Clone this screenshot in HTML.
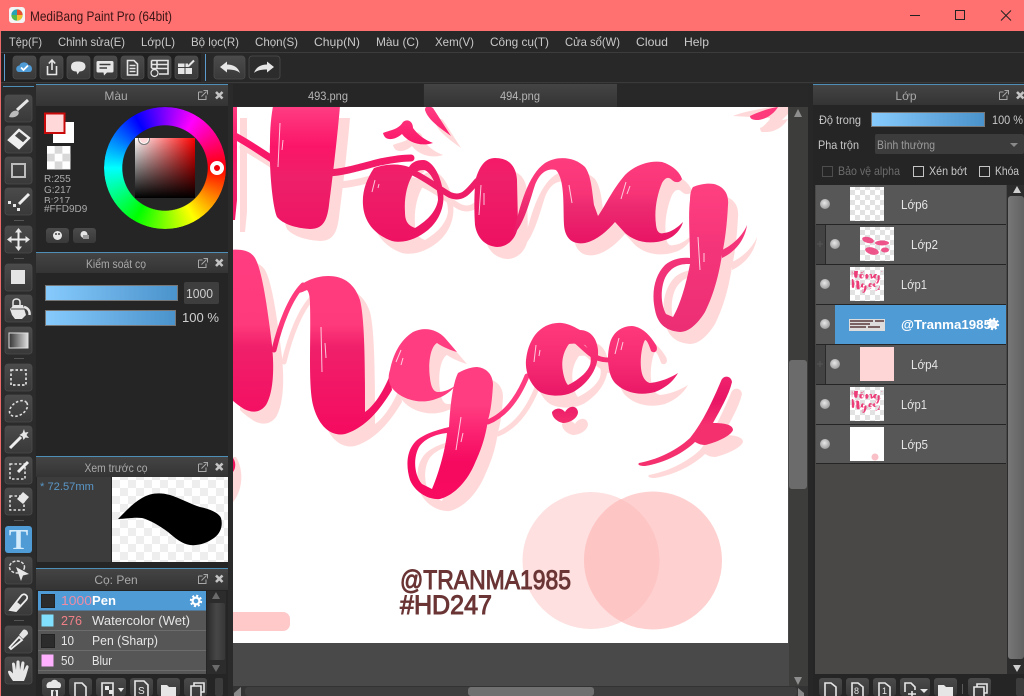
<!DOCTYPE html>
<html><head><meta charset="utf-8"><title>MediBang Paint Pro</title>
<style>
html,body{margin:0;padding:0;background:#2a2a2a;width:1024px;height:696px;overflow:hidden}
svg{position:absolute;left:0;top:0}
svg text{font-family:"Liberation Sans","Noto Sans CJK JP",sans-serif;font-size:12px}
.f{stroke:none;fill-rule:evenodd}
.s{fill:none;stroke-linecap:round;stroke-linejoin:round}
.m{fill:#c9c9c9;font-size:12px}
.t{fill:#a9a9a9;font-size:12px;text-anchor:middle}
.i{fill:#e6e6e6;stroke:none}
.l{fill:none;stroke:#e6e6e6;stroke-width:1.6}
.v{fill:#e4e4e4;font-size:12.5px}
#wheel{position:absolute;left:104px;top:107px;width:122px;height:122px;border-radius:50%;
background:conic-gradient(from 30deg,#f0f 0deg,#f00 60deg,#ff0 120deg,#0f0 180deg,#0ff 240deg,#00f 300deg,#f0f 360deg);
-webkit-mask:radial-gradient(closest-side,transparent 69.5%,#000 70.5%);mask:radial-gradient(closest-side,transparent 69.5%,#000 70.5%)}
#sq{position:absolute;left:135px;top:138px;width:60px;height:60px;overflow:hidden;
background:linear-gradient(to top,#000,rgba(0,0,0,0)),linear-gradient(to right,#fff,#f00)}
#sq i{position:absolute;left:3px;top:-5px;width:10px;height:10px;border-radius:50%;background:#ffd9d9;border:1px solid #777;box-shadow:inset 0 0 0 1px #fff}
#hm{position:absolute;left:210px;top:161px;width:6px;height:6px;border:4px solid #fff;border-radius:50%;background:#f00008}
</style></head><body>
<svg width="1024" height="696" viewBox="0 0 1024 696" xmlns="http://www.w3.org/2000/svg">
<defs>
<linearGradient id="gA" gradientUnits="userSpaceOnUse" x1="0" y1="107" x2="0" y2="250"><stop offset="0" stop-color="#ff3d82"/><stop offset=".28" stop-color="#fb1568"/><stop offset=".5" stop-color="#ee2069"/><stop offset="1" stop-color="#ee1062"/></linearGradient>
<linearGradient id="gB" gradientUnits="userSpaceOnUse" x1="0" y1="158" x2="0" y2="246"><stop offset="0" stop-color="#fd3c7e"/><stop offset=".4" stop-color="#f83477"/><stop offset=".55" stop-color="#ec2a70"/><stop offset="1" stop-color="#e81264"/></linearGradient>
<linearGradient id="gC" gradientUnits="userSpaceOnUse" x1="0" y1="185" x2="0" y2="332"><stop offset="0" stop-color="#ff4080"/><stop offset=".4" stop-color="#f53579"/><stop offset="1" stop-color="#ec2e75"/></linearGradient>
<linearGradient id="gD" gradientUnits="userSpaceOnUse" x1="0" y1="250" x2="0" y2="436"><stop offset="0" stop-color="#ff3d80"/><stop offset=".4" stop-color="#ff3a7c"/><stop offset=".52" stop-color="#f0206a"/><stop offset="1" stop-color="#f50a60"/></linearGradient>
<linearGradient id="gE" gradientUnits="userSpaceOnUse" x1="0" y1="328" x2="0" y2="500"><stop offset="0" stop-color="#ff3d80"/><stop offset=".45" stop-color="#ff3d80"/><stop offset=".62" stop-color="#fb2070"/><stop offset=".78" stop-color="#f50a60"/><stop offset="1" stop-color="#f80a60"/></linearGradient>
<linearGradient id="gF" gradientUnits="userSpaceOnUse" x1="0" y1="323" x2="0" y2="425"><stop offset="0" stop-color="#ff3a7c"/><stop offset=".4" stop-color="#f52a72"/><stop offset=".75" stop-color="#e81565"/><stop offset="1" stop-color="#f5306f"/></linearGradient>
<linearGradient id="sl" x1="0" x2="1" y1="0" y2="0"><stop offset="0" stop-color="#87cbfd"/><stop offset="1" stop-color="#4a92cb"/></linearGradient>
<linearGradient id="bt" x1="0" x2="0" y1="0" y2="1"><stop offset="0" stop-color="#4b4b4b"/><stop offset="1" stop-color="#393939"/></linearGradient>
<linearGradient id="hd" x1="0" x2="0" y1="0" y2="1"><stop offset="0" stop-color="#444"/><stop offset="1" stop-color="#343434"/></linearGradient>
<linearGradient id="gr" x1="0" x2="1" y1="0" y2="0"><stop offset="0" stop-color="#333"/><stop offset="1" stop-color="#e0e0e0"/></linearGradient>
<linearGradient id="th" x1="0" x2="1" y1="0" y2="0"><stop offset="0" stop-color="#777"/><stop offset="1" stop-color="#626262"/></linearGradient>
<linearGradient id="tr" x1="0" x2="1" y1="0" y2="0"><stop offset="0" stop-color="#2d2d2d"/><stop offset=".5" stop-color="#474747"/><stop offset="1" stop-color="#383838"/></linearGradient>
<radialGradient id="eye" cx=".45" cy=".4" r=".6"><stop offset="0" stop-color="#e8e8e8"/><stop offset="1" stop-color="#9c9c9c"/></radialGradient>
<pattern id="c16" width="16" height="16" patternUnits="userSpaceOnUse"><rect width="16" height="16" fill="#fff"/><rect width="8" height="8" fill="#eee"/><rect x="8" y="8" width="8" height="8" fill="#eee"/></pattern>
<pattern id="c15" x="47" y="146" width="15.4" height="15.4" patternUnits="userSpaceOnUse"><rect width="16" height="16" fill="#fff"/><rect x="7.7" width="7.7" height="7.7" fill="#d8d8d8"/><rect y="7.7" width="7.7" height="7.7" fill="#d8d8d8"/></pattern>
<pattern id="c12" width="10" height="10" patternUnits="userSpaceOnUse"><rect width="10" height="10" fill="#fff"/><rect width="5" height="5" fill="#e2e2e2"/><rect x="5" y="5" width="5" height="5" fill="#e2e2e2"/></pattern>
<clipPath id="cv"><rect x="233" y="107" width="555" height="536"/></clipPath>
<clipPath id="cR"><circle cx="653" cy="560" r="69"/></clipPath>
<g id="A">
<path class="f" d="M273,106L340,106C338,130 333,175 329,205C327,222 322,229 310,229C295,228 283,224 277,217C272,205 269,165 270,143C270,128 271,118 273,106Z"/>
<path class="f" d="M230,106H237V200L235,220H230Z"/>
<path class="s" stroke-width="7" d="M233,135C245,141 258,150 272,159M328,173C345,172 360,167 380,162C395,159 405,158 411,158"/>
<path class="f" d="M374,168C366,180 362,192 363,205C364,222 375,235 392,241C405,244 418,238 428,230C440,220 445,205 443,192C441,175 432,160 423,160C417,160 412,162 409,167C398,163 385,164 374,168ZM412,176C407,185 404,198 405,212C405,220 407,225 415,228C425,222 436,213 438,200C438,188 432,172 424,170C418,170 415,172 412,176Z"/>
<path class="s" stroke-width="6" d="M414,173C425,178 438,188 450,195C462,200 468,192 477,181"/>
<path class="f" d="M476,178C480,165 486,158 495,158C508,158 516,165 517,180L518,225C517,238 508,247 497,247C485,246 477,238 475,225C474,210 474,190 476,178Z"/>
<path class="f" d="M383,133C390,130 398,130 403,122C408,118 413,122 413,128C418,135 425,140 433,143C420,147 408,142 402,134C395,140 385,142 383,133Z"/>
<path class="f" d="M425,110C425,105 430,106 433,108L451,136C440,128 428,120 425,110Z"/>
</g>
<g id="B">
<path class="f" d="M513,235C520,205 528,175 545,163C558,155 575,157 585,167C591,175 592,190 594,205L598,216C604,208 612,190 625,175C635,165 650,160 662,162C672,165 680,172 682,179C680,183 675,183 672,180C668,176 665,178 662,183C657,195 654,210 656,225C657,233 660,234 664,233C672,232 678,227 683,222C680,232 672,238 665,240C650,245 635,242 625,233L615,222C608,230 598,240 585,243C572,245 565,238 564,225C563,205 565,180 556,170C548,168 540,172 535,185C530,200 524,225 513,235Z"/>
</g>
<g id="C">
<path class="f" d="M693,187C700,184 708,183 714,184C725,187 729,195 728,205C727,225 725,240 722,255C718,280 712,298 705,312C697,325 688,332 680,332C668,331 658,326 655,310C651,292 655,275 665,265C672,259 682,257 690,258C690,240 688,215 690,200C690,194 691,190 693,187ZM688,264C678,264 670,268 665,278C660,290 661,305 666,314L673,317C680,305 686,285 690,264Z"/>
<path class="f" d="M722,250C733,245 743,235 747,225C745,240 735,252 722,258Z"/>
</g>
<g id="D">
<path class="f" d="M230,250C240,249 250,250 255,258C262,270 267,305 272,345C275,375 272,395 266,405C260,413 252,413 244,409C238,405 234,402 230,398Z"/>
<path class="s" stroke-width="5" d="M274,350C280,325 290,298 303,285"/>
<path class="f" d="M296,290C302,282 315,276 328,276C345,276 355,285 360,300C365,320 365,370 365,412C375,405 384,390 390,375L392,390C380,410 365,428 345,434C330,437 318,425 313,405C308,385 311,340 310,305C310,297 309,292 307,290C302,292 298,295 296,290Z"/>
</g>
<g id="E">
<path class="f" d="M390,370C393,355 400,340 413,332C425,326 438,330 445,338L457,352C450,350 443,347 437,343C430,347 428,365 430,378C431,388 434,392 438,392C445,392 450,389 455,386C450,393 440,399 428,401C415,403 400,398 392,388C388,382 388,376 390,370Z"/>
<path class="f" d="M458,373C465,369 472,367 477,367C487,368 493,375 493,385C492,400 491,410 488,420C485,440 480,452 475,463C468,480 455,495 440,499C428,500 415,492 410,480C406,467 406,452 415,442C423,434 437,430 449,427C450,410 452,385 458,373ZM447,433C437,434 425,438 419,447C413,458 414,475 422,484L432,489C438,475 445,452 447,433Z"/>
<path class="s" stroke-width="5" d="M488,422C505,415 518,398 527,376"/>
</g>
<g id="G">
<path class="f" d="M535,335C542,326 552,322 562,323C570,324 576,328 580,330C590,330 597,338 598,350C599,365 592,380 575,391C565,397 550,397 540,392C530,385 525,372 526,360C527,350 530,342 535,335ZM569,344C563,352 561,362 563,372C564,378 566,383 568,385C578,380 587,373 590,365C592,358 590,350 585,345C580,344 574,343 569,344Z"/>
<path class="s" stroke-width="5" d="M572,338C578,342 585,350 592,355C598,359 603,360 610,360"/>
<path class="f" d="M610,343C613,332 622,326 632,326C642,327 650,335 656,345C659,351 654,354 651,351C649,345 647,340 645,340C642,345 640,358 641,368C642,378 646,382 650,383C660,382 670,378 678,373C673,382 665,388 655,392C640,396 625,393 615,383C608,375 606,358 610,343Z"/>
<path class="f" d="M552,412C556,407 562,408 565,412C569,405 577,405 578,412C578,418 570,423 563,423C558,422 552,418 552,412Z"/>
<path class="f" d="M639,463C655,460 675,452 690,438C703,422 713,400 721,381C723,375 731,375 732,382C729,395 720,410 713,423C722,423 733,424 733,430C731,436 715,443 705,445C700,445 697,443 695,442C685,452 665,463 645,466C640,466 637,465 639,463Z"/>
<path class="f" d="M750,116C758,112 770,108 778,107C774,114 765,120 757,120C753,120 750,119 750,116Z"/>
</g>
<g id="art"><use href="#A"/><use href="#B"/><use href="#C"/><use href="#D"/><use href="#E"/><use href="#G"/></g>
<g id="pi"><path d="M0.5,2H4.5M0.5,2V9.5H8V5.5" fill="none" stroke="#a8a8a8"/><path d="M3.5,6.5L8.5,1.5M5.5,.5H9.5V4.5" fill="none" stroke="#a8a8a8"/></g>
<g id="px"><path d="M1,1L7.5,7.5M7.5,1L1,7.5" stroke="#c4c4c4" stroke-width="2.6"/></g>
<g id="gear"><circle r="3.4" fill="none" stroke="#fff" stroke-width="2.2"/><circle r="5" fill="none" stroke="#fff" stroke-width="2.4" stroke-dasharray="2 1.93"/></g>
<g id="eyeb"><circle r="5" fill="url(#eye)"/></g>
<rect id="tb" width="27" height="27" rx="3" fill="url(#bt)" stroke="#4c4c4c" stroke-width=".8"/>
<rect id="b23" width="23" height="23" rx="3" fill="url(#bt)" stroke="#4c4c4c" stroke-width=".8"/>
</defs>

<!-- window -->
<rect width="1024" height="696" fill="#2a2a2a"/>
<rect width="1024" height="31" fill="#ff7070"/>
<rect x="0" y="31" width="1" height="665" fill="#e86a6a"/>
<rect x="9" y="7" width="16" height="16" rx="3" fill="#f4f4f4"/>
<circle cx="17" cy="15" r="5.6" fill="#27a3b8"/><path d="M17,9.4A5.6,5.6 0 0 1 22.6,15L17,15Z" fill="#e8502e"/><path d="M22.6,15A5.6,5.6 0 0 1 17,20.6L17,15Z" fill="#f0c030"/><path d="M17,20.6A5.6,5.6 0 0 1 11.4,15L17,15Z" fill="#58b848"/>
<text x="30" y="21" textLength="142" lengthAdjust="spacingAndGlyphs" style="font-size:14px" fill="#3a1515">MediBang Paint Pro (64bit)</text>
<path d="M910,15.5H920" stroke="#222" stroke-width="1"/>
<rect x="955.5" y="10.5" width="9" height="9" fill="none" stroke="#222"/>
<path d="M1001,10.5L1011,20.5M1011,10.5L1001,20.5" stroke="#222"/>

<!-- menu -->
<rect x="1" y="31" width="1023" height="21" fill="#282828"/>
<g>
<text class="m" x="9" y="46" textLength="33" lengthAdjust="spacingAndGlyphs">Tệp(F)</text>
<text class="m" x="58" y="46" textLength="67" lengthAdjust="spacingAndGlyphs">Chỉnh sửa(E)</text>
<text class="m" x="141" y="46" textLength="34" lengthAdjust="spacingAndGlyphs">Lớp(L)</text>
<text class="m" x="191" y="46" textLength="48" lengthAdjust="spacingAndGlyphs">Bộ lọc(R)</text>
<text class="m" x="255" y="46" textLength="43" lengthAdjust="spacingAndGlyphs">Chọn(S)</text>
<text class="m" x="314" y="46" textLength="46" lengthAdjust="spacingAndGlyphs">Chụp(N)</text>
<text class="m" x="376" y="46" textLength="43" lengthAdjust="spacingAndGlyphs">Màu (C)</text>
<text class="m" x="435" y="46" textLength="39" lengthAdjust="spacingAndGlyphs">Xem(V)</text>
<text class="m" x="490" y="46" textLength="59" lengthAdjust="spacingAndGlyphs">Công cụ(T)</text>
<text class="m" x="565" y="46" textLength="55" lengthAdjust="spacingAndGlyphs">Cửa sổ(W)</text>
<text class="m" x="636" y="46" textLength="32" lengthAdjust="spacingAndGlyphs">Cloud</text>
<text class="m" x="684" y="46" textLength="25" lengthAdjust="spacingAndGlyphs">Help</text>
</g>

<!-- toolbar -->
<rect x="1" y="52" width="1023" height="1" fill="#3c3c3c"/>
<rect x="1" y="53" width="1023" height="29" fill="#282828"/>
<rect x="1" y="53" width="200" height="29" fill="#202020"/>
<rect x="1" y="82" width="1023" height="1" fill="#3a3a3a"/>
<rect x="4" y="54" width="1" height="27" fill="#5b9ccc"/><rect x="205" y="54" width="1" height="27" fill="#5b9ccc"/>
<use href="#b23" x="13" y="56"/><use href="#b23" x="40" y="56"/><use href="#b23" x="67" y="56"/><use href="#b23" x="94" y="56"/><use href="#b23" x="121" y="56"/><use href="#b23" x="148" y="56"/><use href="#b23" x="175" y="56"/>
<rect x="214" y="56" width="31" height="23" rx="3" fill="url(#bt)" stroke="#4c4c4c" stroke-width=".8"/>
<rect x="249" y="56" width="31" height="23" rx="3" fill="#2c2c2c" stroke="#4c4c4c" stroke-width=".8"/>
<path d="M19,72C15.5,72 15,66 19.5,65.5C20.5,61.5 27,61.5 28.5,65C33,65 33,72 29.5,72Z" fill="#4f9bd6"/><path d="M21,67.5L23.5,70L28,65.5" fill="none" stroke="#fff" stroke-width="1.8"/>
<path class="l" d="M47.5,66V74.5H56.5V66"/><path class="l" d="M52,70V60M48.8,63.5L52,60L55.2,63.5"/>
<path class="i" d="M71,67C71,62.5 74,61.5 78,61.5C82,61.5 85.5,62.5 85.5,66.5C85.5,70 82,71.5 79.5,71.5L77.5,74.5L76.5,71.5C73,71.5 71,70 71,67Z"/>
<path class="i" d="M98,61H112Q113.5,61 113.5,62.5V71Q113.5,72.5 112,72.5H107L104,75.5L103.5,72.5H98Q96.5,72.5 96.5,71V62.5Q96.5,61 98,61Z"/><path d="M99.5,64.5H110.5M99.5,68H107" stroke="#3d3d3d" stroke-width="1.6"/>
<path class="l" d="M127.5,60.5H134L137.5,64V75H127.5ZM129.5,65.5H135.5M129.5,68.5H135.5M129.5,71.5H135.5" stroke-width="1.2"/>
<path class="l" d="M151.5,60.5H168V74H159M151.5,60.5V68M151.5,64.5H168M151.5,68.5H168M157,60.5V68" stroke-width="1.2"/><circle cx="154.5" cy="73" r="3.5" fill="none" stroke="#e6e6e6" stroke-width="1.2"/>
<path class="i" d="M178,63.5H184.5V67H178ZM185.5,63.5H188V67H185.5ZM178,68H184.5V74H178ZM185.5,68H192V74H185.5Z"/><path d="M188,66.5L194,60.5" stroke="#e6e6e6" stroke-width="2"/>
<path class="i" d="M220,67L227,61.5V64.5C233,64.5 238,67 240,73C237,70 232,69.5 227,69.5V72.5Z"/>
<path class="i" d="M274,67L267,61.5V64.5C261,64.5 256,67 254,73C257,70 262,69.5 267,69.5V72.5Z"/>

<!-- left tool column -->
<rect x="1" y="83" width="34" height="613" fill="#2b2b2b"/>
<rect x="3" y="86" width="31" height="1" fill="#4e8fb8"/>
<use href="#tb" x="5" y="95"/><use href="#tb" x="5" y="126"/><use href="#tb" x="5" y="157"/><use href="#tb" x="5" y="188"/><use href="#tb" x="5" y="226"/><use href="#tb" x="5" y="264"/><use href="#tb" x="5" y="295"/><use href="#tb" x="5" y="327"/><use href="#tb" x="5" y="364"/><use href="#tb" x="5" y="395"/><use href="#tb" x="5" y="426"/><use href="#tb" x="5" y="457"/><use href="#tb" x="5" y="488"/>
<rect x="5" y="526" width="27" height="27" rx="3" fill="#4f9bd6"/>
<use href="#tb" x="5" y="557"/><use href="#tb" x="5" y="588"/><use href="#tb" x="5" y="626"/><use href="#tb" x="5" y="657"/>
<path d="M14,220.5H24M14,258.5H24M14,358.5H24M14,520.5H24M14,620.5H24" stroke="#555"/>
<!-- tool icons -->
<g transform="translate(5,95)"><path d="M23,5L12,15" stroke="#e6e6e6" stroke-width="3"/><path d="M4,22C6,16 10,14.5 13.5,16.5C15,20 10,23.5 4,22Z" fill="#bbb"/></g>
<g transform="translate(5,126)"><path d="M4,14L14,4L24,12L14,22Z" fill="none" stroke="#eee" stroke-width="2.4"/><path d="M4,14L9,9L19,17L14,22Z" fill="#eee"/></g>
<g transform="translate(5,157)"><rect x="7" y="7" width="13" height="13" fill="none" stroke="#bdbdbd" stroke-width="2"/></g>
<g transform="translate(5,188)"><path d="M24,6L14,16" stroke="#eee" stroke-width="3"/><path class="i" d="M3,13h3v3h-3zM8,16h3v3h-3zM12,20h3v3h-3z"/></g>
<g transform="translate(5,226)"><path d="M13.5,5V22M5,13.5H22" stroke="#eee" stroke-width="2"/><path class="i" d="M13.5,2L17,6.5H10ZM13.5,25L17,20.5H10ZM2,13.5L6.5,10V17ZM25,13.5L20.5,10V17Z"/></g>
<g transform="translate(5,264)"><rect x="6" y="6" width="14" height="14" fill="#e4e4e4"/></g>
<g transform="translate(5,295)"><path class="i" d="M5,14L9,10H18L21,20L17,24H10L7,20Z"/><path d="M8,12V7C8,3 15,3 15,7V10" fill="none" stroke="#e6e6e6" stroke-width="1.5"/><path d="M19,12C23,13 25,16 24.5,20" fill="none" stroke="#e6e6e6" stroke-width="2.5"/><path d="M6,14H20" stroke="#444" stroke-width="1"/></g>
<g transform="translate(5,327)"><rect x="4" y="6" width="19" height="15" fill="url(#gr)" stroke="#e0e0e0"/></g>
<g transform="translate(5,364)"><rect x="6" y="6" width="15" height="15" fill="none" stroke="#ddd" stroke-width="1.7" stroke-dasharray="2.5 2"/></g>
<g transform="translate(5,395)"><ellipse cx="13.5" cy="13.5" rx="10" ry="6.5" transform="rotate(-35 13.5 13.5)" fill="none" stroke="#ddd" stroke-width="1.6" stroke-dasharray="2.5 2"/></g>
<g transform="translate(5,426)"><path d="M5,22L16,11" stroke="#eee" stroke-width="3"/><path class="i" d="M19,3L20,6.5L23.5,6L21.5,9L24,12L20.5,11.5L18.5,14L17.5,10.5L14.5,9L17.5,7Z"/></g>
<g transform="translate(5,457)"><rect x="5" y="7" width="15" height="15" fill="none" stroke="#ddd" stroke-width="1.6" stroke-dasharray="2.5 2"/><path d="M23,5L13,15" stroke="#eee" stroke-width="3"/></g>
<g transform="translate(5,488)"><rect x="5" y="8" width="14" height="14" fill="none" stroke="#ddd" stroke-width="1.6" stroke-dasharray="2.5 2"/><path class="i" d="M12,11L18,4L24,9L18,16Z"/></g>
<text x="18.5" y="549" text-anchor="middle" style="font-family:'Liberation Serif',serif;font-size:29px;font-weight:bold" fill="#d3ebfb">T</text>
<g transform="translate(5,557)"><ellipse cx="12" cy="10" rx="7.5" ry="6" fill="none" stroke="#ddd" stroke-width="1.5" stroke-dasharray="3 1.5"/><path class="i" d="M11,10L24,17L18,18.5L16,24Z"/></g>
<g transform="translate(5,588)"><path d="M5,22L16,8C19,4 24,8 21.5,11.5L11,23Z" fill="none" stroke="#eee" stroke-width="1.8"/><path class="i" d="M5,22L12,14L17,18L11,23Z"/></g>
<g transform="translate(5,626)"><path d="M6,23L4.5,21.5L14,11L17,14Z" fill="none" stroke="#eee" stroke-width="1.8"/><path class="i" d="M14,9L18,4C20,2 24.5,6 22.5,8.5L18,13Z"/></g>
<g transform="translate(5,657)"><path class="i" d="M8,24C6,21 3,17 3,14.5C4,13 6,14 8,16.5L7,7C7,5 9.5,5 10,7L11,13L11.5,4.5C12,3 14,3 14.5,4.5L15,13L16.5,5.5C17,4 19,4 19.5,6L18.5,14L21,9C22,7.5 24,8.5 23.5,10.5L21,19L19,24Z"/></g>

<!-- colour panel -->
<rect x="36" y="84" width="192" height="168" fill="#252525"/>
<rect x="36" y="84" width="192" height="1" fill="#4e8fb8"/>
<rect x="36" y="85" width="192" height="21" fill="url(#hd)"/>
<text class="t" x="116" y="100">Màu</text>
<use href="#pi" x="198" y="90"/><use href="#px" x="215" y="91"/>
<rect x="53" y="122" width="21" height="21" fill="#fff"/>
<rect x="45" y="113.5" width="19.5" height="19.5" fill="#ffd9d9" stroke="#c80a0a" stroke-width="2"/>
<rect x="47" y="146" width="23.5" height="23.5" fill="url(#c15)"/>
<text x="44" y="182" fill="#a9a9a9" style="font-size:10px">R:255</text>
<text x="44" y="193" fill="#a9a9a9" style="font-size:10px">G:217</text>
<text x="44" y="204" fill="#a9a9a9" style="font-size:10px">B:217</text>
<rect x="40" y="203" width="40" height="3" fill="#252525"/>
<text x="44" y="212" fill="#a9a9a9" style="font-size:10px">#FFD9D9</text>
<rect x="46" y="228" width="23" height="15" rx="3" fill="url(#bt)"/><rect x="73" y="228" width="23" height="15" rx="3" fill="url(#bt)"/>
<circle cx="57.5" cy="235.5" r="4.5" fill="#e6e6e6"/><circle cx="84" cy="234.5" r="3.5" fill="#e6e6e6"/><rect x="83" y="235" width="6" height="4" fill="#999"/>
<circle cx="56" cy="234" r="1" fill="#444"/><circle cx="59" cy="234" r="1" fill="#444"/>

<!-- brush control -->
<rect x="36" y="252" width="192" height="204" fill="#252525"/>
<rect x="36" y="252" width="192" height="1" fill="#4e8fb8"/>
<rect x="36" y="253" width="192" height="20" fill="url(#hd)"/>
<text class="t" x="116" y="268" textLength="60" lengthAdjust="spacingAndGlyphs">Kiểm soát cọ</text>
<use href="#pi" x="198" y="258"/><use href="#px" x="215" y="258.5"/>
<rect x="45.5" y="285.5" width="132" height="15" fill="url(#sl)" stroke="#777"/>
<rect x="45.5" y="310.5" width="130" height="15" fill="url(#sl)" stroke="#777"/>
<rect x="184" y="282" width="35" height="22" rx="2" fill="#3e3e3e"/>
<text x="186" y="298" fill="#cfcfcf" textLength="27" lengthAdjust="spacingAndGlyphs" style="font-size:13px">1000</text>
<text x="182" y="322" fill="#cfcfcf" textLength="37" lengthAdjust="spacingAndGlyphs" style="font-size:13px">100 %</text>

<!-- preview -->
<rect x="36" y="456" width="192" height="112" fill="#252525"/>
<rect x="36" y="456" width="192" height="1" fill="#4e8fb8"/>
<rect x="36" y="457" width="192" height="20" fill="url(#hd)"/>
<text class="t" x="116" y="472" textLength="63" lengthAdjust="spacingAndGlyphs">Xem trước cọ</text>
<use href="#pi" x="198" y="462"/><use href="#px" x="215" y="462.5"/>
<rect x="37" y="477" width="74" height="85" fill="#3c3c3c"/>
<text x="40" y="490" fill="#5a97c8" style="font-size:11px" textLength="54" lengthAdjust="spacingAndGlyphs">* 72.57mm</text>
<rect x="112" y="477" width="116" height="85" fill="url(#c16)"/>
<path d="M118,519C126,511 133,503 142,498C150,493 160,492 170,495C180,498 190,504 200,507C210,509 219,513 221,518C223,525 221,533 214,538C207,543 198,546 190,545C182,544 175,538 168,532C160,526 150,520 142,518C134,517 125,519 118,519Z" fill="#000"/>

<!-- brush list -->
<rect x="36" y="568" width="192" height="128" fill="#252525"/>
<rect x="36" y="568" width="192" height="1" fill="#4e8fb8"/>
<rect x="36" y="569" width="192" height="21" fill="url(#hd)"/>
<text class="t" x="116" y="584">Cọ: Pen</text>
<use href="#pi" x="198" y="574"/><use href="#px" x="215" y="574.5"/>
<rect x="38" y="591" width="168" height="83" fill="#565656"/>
<rect x="38" y="591" width="168" height="19.5" fill="#4f9bd6"/>
<path d="M38,630.5H206M38,650.5H206M38,670.5H206" stroke="#6c6c6c"/>
<rect x="41.5" y="594.5" width="13" height="13" fill="#2c2c2c" stroke="#222"/>
<rect x="41.5" y="614.5" width="12" height="12" fill="#82e0ff"/>
<rect x="41.5" y="634.5" width="13" height="13" fill="#2c2c2c" stroke="#222"/>
<rect x="41.5" y="654.5" width="12" height="12" fill="#ffb0ff"/>
<text x="61" y="605" fill="#ee8ca4" style="font-size:13px" textLength="31" lengthAdjust="spacingAndGlyphs">1000</text>
<text x="92" y="605" fill="#fff" style="font-size:13px;font-weight:bold" textLength="24" lengthAdjust="spacingAndGlyphs">Pen</text>
<text x="61" y="625" fill="#f08088" style="font-size:13px" textLength="21" lengthAdjust="spacingAndGlyphs">276</text>
<text x="92" y="625" fill="#e6e6e6" style="font-size:13px" textLength="98" lengthAdjust="spacingAndGlyphs">Watercolor (Wet)</text>
<text x="61" y="645" fill="#e6e6e6" style="font-size:13px" textLength="13" lengthAdjust="spacingAndGlyphs">10</text>
<text x="92" y="645" fill="#e6e6e6" style="font-size:13px" textLength="66" lengthAdjust="spacingAndGlyphs">Pen (Sharp)</text>
<text x="61" y="665" fill="#e6e6e6" style="font-size:13px" textLength="13" lengthAdjust="spacingAndGlyphs">50</text>
<text x="92" y="665" fill="#e6e6e6" style="font-size:13px" textLength="20" lengthAdjust="spacingAndGlyphs">Blur</text>
<use href="#gear" x="196" y="601"/>
<rect x="207" y="591" width="19" height="83" fill="#2c2c2c"/>
<rect x="208" y="603" width="17" height="57" rx="2" fill="url(#tr)"/>
<path d="M216,592L212,599H220ZM216,672L212,665H220Z" fill="#6b6b6b"/>
<rect x="42" y="678" width="23" height="18" rx="3" fill="url(#bt)"/><rect x="69" y="678" width="23" height="18" rx="3" fill="url(#bt)"/><rect x="96" y="678" width="30" height="18" rx="3" fill="url(#bt)"/><rect x="130" y="678" width="23" height="18" rx="3" fill="url(#bt)"/><rect x="157" y="678" width="23" height="18" rx="3" fill="url(#bt)"/><rect x="184" y="678" width="23" height="18" rx="3" fill="url(#bt)"/><rect x="215" y="678" width="8" height="18" rx="2" fill="#3c3c3c"/>
<path class="i" d="M47,688C45,684 49,681 51,682C52,679 57,679 58,682C61,682 62,686 60,688ZM51,690H58V696H51Z"/><path d="M53,692L54.5,689L56,692V696H53Z" fill="#444"/>
<path class="l" d="M75,696V683H82L86,687V696" stroke-width="1.4"/>
<path class="l" d="M102,696V683H113V696" stroke-width="1.4"/><rect x="105" y="686" width="4" height="4" fill="#e6e6e6"/><rect x="109" y="690" width="4" height="4" fill="#e6e6e6"/>
<path d="M118,688H124L121,692Z" fill="#e6e6e6"/>
<path class="l" d="M135,696V681H144L148,685V696" stroke-width="1.4"/><text x="138" y="694" fill="#e6e6e6" style="font-size:10px">S</text>
<path class="i" d="M161,685H167L169,687H176V696H161Z"/>
<path class="l" d="M191,696V686H201V696M194,686V683H204V692H201" stroke-width="1.4"/>

<!-- canvas region -->
<rect x="233" y="84" width="575" height="23" fill="#282828"/>
<rect x="233" y="84" width="190" height="22" fill="#262626"/>
<rect x="424" y="84" width="193" height="23" fill="url(#hd)"/>
<text x="308" y="100" textLength="40" lengthAdjust="spacingAndGlyphs" fill="#b5b5b5">493.png</text>
<text x="500" y="100" textLength="40" lengthAdjust="spacingAndGlyphs" fill="#b5b5b5">494.png</text>
<rect x="233" y="107" width="575" height="589" fill="#494949"/>
<rect x="233" y="107" width="555" height="536" fill="#fff"/>
<g clip-path="url(#cv)">
  <g transform="translate(10,12)" fill="#ffd9d9" stroke="#ffd9d9"><use href="#art"/></g>
  <path d="M733,116C745,111 770,107 790,104V112C780,122 770,133 762,132C756,130 770,122 770,118Z" fill="#ffd9d9"/>
  <path d="M233,457H236C244,470 243,490 233,502Z" fill="#ffd9d9"/>
  <path d="M233,458C236,462 236,468 233,472Z" fill="#f0155f"/>
  <rect x="225" y="612" width="65" height="19" rx="7" fill="#ffc9c9"/>
  <circle cx="591" cy="560.5" r="68.5" fill="#fde0df"/>
  <circle cx="653" cy="560.5" r="69" fill="#ffd0d0"/>
  <circle cx="591" cy="560.5" r="68.5" fill="#fec5c5" clip-path="url(#cR)"/>
  <g fill="url(#gA)" stroke="url(#gA)"><use href="#A"/></g>
  <g fill="url(#gB)" stroke="url(#gB)"><use href="#B"/></g>
  <g fill="url(#gC)" stroke="url(#gC)"><use href="#C"/></g>
  <g fill="url(#gD)" stroke="url(#gD)"><use href="#D"/></g>
  <g fill="url(#gE)" stroke="url(#gE)"><use href="#E"/></g>
  <g fill="url(#gF)" stroke="url(#gF)"><use href="#G"/></g>
  <path d="M280,123L278,167M283,140L282,150M375,180L372,192M379,184L378,188M481,185L479,215M484,193L484,205M569,185L572,203M626,182L621,199M630,186L627,194M698,237L700,270M704,253L704,262M321,327L322,372M325,343L326,358M401,350L396,362M403,358L401,365M461,417L456,450M463,433L461,442M536,345L534,362M540,350L539,356M619,338L615,354M623,342L621,350" stroke="#fff" stroke-width="1" opacity=".75" fill="none"/>
  <text x="400" y="589" textLength="171" lengthAdjust="spacingAndGlyphs" style="font-size:27px" fill="#6b3535" stroke="#6b3535" stroke-width="1">@TRANMA1985</text>
  <text x="400" y="614" textLength="92" lengthAdjust="spacingAndGlyphs" style="font-size:27px" fill="#6b3535" stroke="#6b3535" stroke-width="1">#HD247</text>
</g>
<!-- vertical scrollbar -->
<rect x="789" y="107" width="19" height="580" fill="#3d3d3b"/>
<rect x="789" y="360" width="18" height="129" rx="3" fill="#6b6b6b"/>
<path d="M798,109L794,117H802ZM798,685L794,677H802Z" fill="#8e8e8e"/>
<rect x="808" y="84" width="5" height="612" fill="#272727"/>
<!-- horizontal scrollbar -->
<rect x="233" y="686" width="575" height="10" fill="#333"/>
<rect x="245" y="687" width="552" height="9" rx="3" fill="#3e3e3e"/>
<rect x="468" y="687" width="126" height="9" rx="3" fill="#707070"/>
<path d="M234,693L241,687V696H234Z" fill="#888"/><path d="M804,693L798,688V696H804Z" fill="#888"/>

<!-- right panel -->
<rect x="813" y="84" width="211" height="612" fill="#252525"/>
<rect x="813" y="84" width="211" height="1" fill="#4e8fb8"/>
<rect x="813" y="85" width="211" height="20" fill="url(#hd)"/>
<text class="t" x="906" y="100">Lớp</text>
<use href="#pi" x="999" y="90"/><use href="#px" x="1016" y="91"/>
<text x="819" y="124" fill="#c8c8c8" textLength="42" lengthAdjust="spacingAndGlyphs">Độ trong</text>
<rect x="871.5" y="112.5" width="113" height="14" fill="url(#sl)" stroke="#777"/>
<text x="992" y="124" fill="#c8c8c8" textLength="31" lengthAdjust="spacingAndGlyphs">100 %</text>
<text x="818" y="149" fill="#c8c8c8" textLength="41" lengthAdjust="spacingAndGlyphs">Pha trộn</text>
<rect x="875" y="134" width="149" height="20" rx="2" fill="#3c3c3c"/>
<text x="877" y="149" fill="#9c9c9c" textLength="58" lengthAdjust="spacingAndGlyphs">Bình thường</text>
<path d="M1010,143H1018L1014,147Z" fill="#8a8a8a"/>
<rect x="822.5" y="166.5" width="10" height="10" fill="none" stroke="#4d4d4d"/>
<text x="838" y="175" fill="#6c6c6c" textLength="62" lengthAdjust="spacingAndGlyphs">Bảo vệ alpha</text>
<rect x="913.5" y="166.5" width="10" height="10" fill="none" stroke="#c4c4c4"/>
<text x="929" y="175" fill="#c8c8c8" textLength="38" lengthAdjust="spacingAndGlyphs">Xén bớt</text>
<rect x="979.5" y="166.5" width="10" height="10" fill="none" stroke="#c4c4c4"/>
<text x="995" y="175" fill="#c8c8c8" textLength="24" lengthAdjust="spacingAndGlyphs">Khóa</text>
<rect x="815" y="185" width="192" height="489" fill="#494847"/>
<rect x="816" y="185" width="190" height="278" fill="#575757"/>
<rect x="815" y="225" width="10" height="39" fill="#434343"/><rect x="815" y="345" width="10" height="39" fill="#434343"/>
<rect x="825" y="225" width="1" height="39" fill="#2a2a2a"/><rect x="825" y="345" width="1" height="39" fill="#2a2a2a"/>
<path d="M817,244H823M820,241V247M817,364H823M820,361V367" stroke="#555"/>
<path d="M816,224.5H1006M816,264.5H1006M816,304.5H1006M816,344.5H1006M816,384.5H1006M816,424.5H1006M816,463.5H1006" stroke="#252525"/>
<rect x="835" y="305" width="171" height="39" fill="#4f9bd6"/>
<use href="#eyeb" x="825" y="204"/><use href="#eyeb" x="835" y="244"/><use href="#eyeb" x="825" y="284"/><use href="#eyeb" x="825" y="324"/><use href="#eyeb" x="835" y="364"/><use href="#eyeb" x="825" y="404"/><use href="#eyeb" x="825" y="444"/>
<rect x="850" y="187" width="34" height="34" fill="url(#c12)"/>
<rect x="860" y="227" width="34" height="34" fill="url(#c12)"/>
<g fill="#ee4580" opacity=".9"><ellipse cx="868" cy="240" rx="6" ry="3" transform="rotate(15 868 240)"/><ellipse cx="882" cy="243" rx="7" ry="2.5"/><ellipse cx="872" cy="251" rx="7" ry="3.5" transform="rotate(15 872 251)"/><ellipse cx="885" cy="250" rx="4" ry="2.5"/></g>
<rect x="850" y="267" width="34" height="34" fill="url(#c12)"/>
<g transform="translate(850,267) scale(.056) translate(-197,-36)" fill="#ec3d78" stroke="#ec3d78"><use href="#art"/></g>
<rect x="849" y="319" width="36" height="12" fill="#ddd"/>
<path d="M850,321H873M875,321H884M850,324H870M850,327H866M868,327H880" stroke="#5a3a3a" stroke-width="1.4"/>
<rect x="860" y="347" width="34" height="34" fill="#ffd6d6"/>
<rect x="850" y="387" width="34" height="34" fill="url(#c12)"/>
<g transform="translate(850,387) scale(.056) translate(-197,-36)" fill="#ec3d78" stroke="#ec3d78"><use href="#art"/></g>
<rect x="850" y="427" width="34" height="34" fill="#fff"/>
<circle cx="875" cy="457" r="3.5" fill="#f9c0c8"/>
<text x="901" y="209" class="v" textLength="27" lengthAdjust="spacingAndGlyphs">Lớp6</text>
<text x="911" y="249" class="v" textLength="27" lengthAdjust="spacingAndGlyphs">Lớp2</text>
<text x="901" y="289" class="v" textLength="26" lengthAdjust="spacingAndGlyphs">Lớp1</text>
<text x="901" y="329" fill="#fff" style="font-size:13px;font-weight:bold" textLength="90" lengthAdjust="spacingAndGlyphs">@Tranma1985</text>
<use href="#gear" x="993" y="324"/><circle cx="993" cy="324" r="2.5" fill="#dfeefa"/>
<text x="911" y="369" class="v" textLength="27" lengthAdjust="spacingAndGlyphs">Lớp4</text>
<text x="901" y="409" class="v" textLength="26" lengthAdjust="spacingAndGlyphs">Lớp1</text>
<text x="901" y="449" class="v" textLength="27" lengthAdjust="spacingAndGlyphs">Lớp5</text>
<rect x="1007" y="185" width="17" height="489" fill="#2c2c2c"/>
<rect x="1008" y="196" width="16" height="463" rx="3" fill="url(#th)"/>
<path d="M1017,186L1013,193H1021ZM1017,672L1013,665H1021Z" fill="#cfcfcf"/>
<g>
<rect x="819" y="678" width="23" height="18" rx="3" fill="url(#bt)"/><rect x="846" y="678" width="23" height="18" rx="3" fill="url(#bt)"/><rect x="873" y="678" width="23" height="18" rx="3" fill="url(#bt)"/><rect x="900" y="678" width="30" height="18" rx="3" fill="url(#bt)"/><rect x="934" y="678" width="23" height="18" rx="3" fill="url(#bt)"/><rect x="968" y="678" width="23" height="18" rx="3" fill="url(#bt)"/><rect x="1016" y="678" width="8" height="18" rx="2" fill="#3c3c3c"/>
<path d="M962.5,684V694" stroke="#5a5a5a"/>
<path class="l" d="M825,696V683H831L836,687V696" stroke-width="1.4"/>
<path class="l" d="M852,696V683H858L863,687V696" stroke-width="1.4"/><text x="854" y="694" fill="#e6e6e6" style="font-size:9px">8</text>
<path class="l" d="M879,696V683H885L890,687V696" stroke-width="1.4"/><text x="882" y="694" fill="#e6e6e6" style="font-size:9px">1</text>
<path class="l" d="M905,692V683H911L915,687V690M912,691V696M908,694H916" stroke-width="1.4"/><path d="M920,689H928L924,693Z" fill="#e6e6e6"/>
<path class="i" d="M938,685H944L946,687H953V696H938Z"/>
<path class="l" d="M974,696V687H984V696M977,687V684H987V693H984" stroke-width="1.4"/>
</g>
</svg>
<div id="wheel"></div>
<div id="sq"><i></i></div>
<div id="hm"></div>
</body></html>
